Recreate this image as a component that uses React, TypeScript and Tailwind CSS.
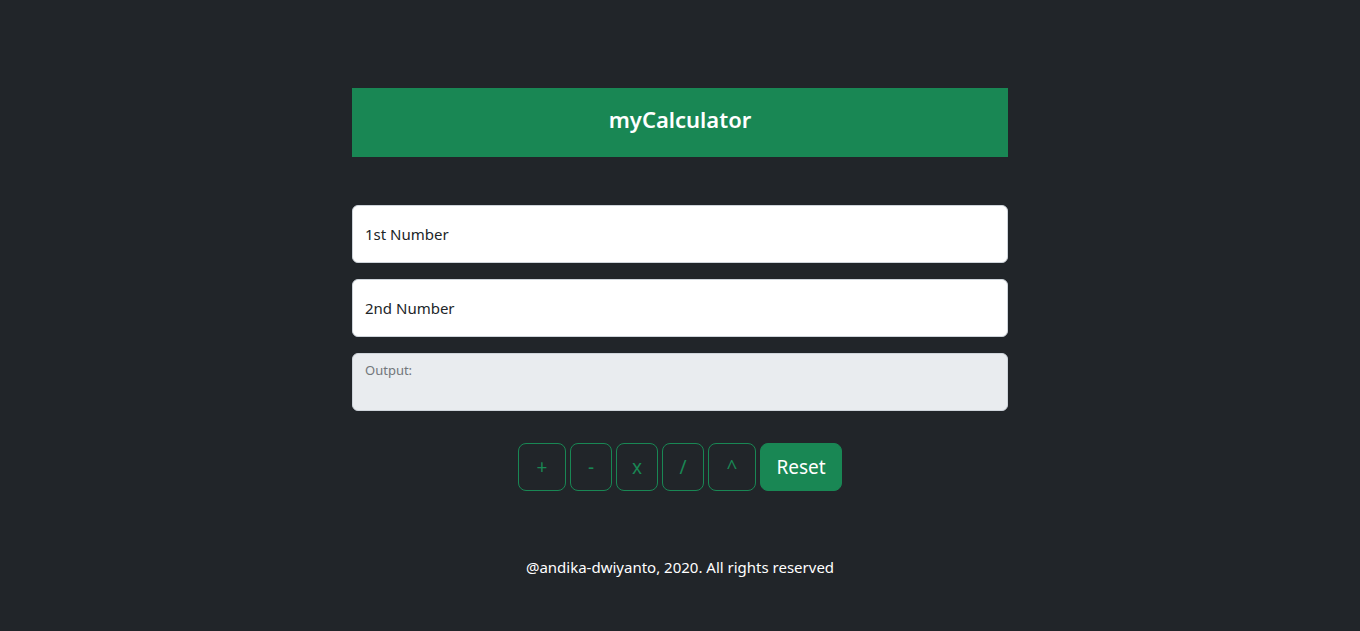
export default function App() {
  const ops = [
    { label: '+', w: 'w-12' },
    { label: '-', w: 'w-[42px]' },
    { label: 'x', w: 'w-[42px]' },
    { label: '/', w: 'w-[42px]' },
    { label: '^', w: 'w-12' },
  ];

  return (
    <div className="min-h-screen bg-[#212529] font-['Noto_Sans',sans-serif] text-[#212529]">
      <div className="mx-auto w-[656px] pt-[88px]">
        {/* Title bar */}
        <div className="flex h-[69px] items-center justify-center bg-[#198754] pb-[7px]">
          <h3 className="text-[22px] font-semibold leading-none text-white">myCalculator</h3>
        </div>

        {/* Inputs */}
        <div className="mt-[48px] flex flex-col gap-4">
          <div className="flex h-[58px] items-center rounded-md border border-[#ced4da] bg-white px-3">
            <span className="text-[15px] leading-6">1st Number</span>
          </div>
          <div className="flex h-[58px] items-center rounded-md border border-[#ced4da] bg-white px-3">
            <span className="text-[15px] leading-6">2nd Number</span>
          </div>
          <div className="h-[58px] rounded-md border border-[#ced4da] bg-[#e9ecef] px-3 pt-[9px]">
            <span className="block text-[13px] leading-[14px] text-[#72767b]">Output:</span>
          </div>
        </div>

        {/* Operator buttons */}
        <div className="mt-8 flex justify-center gap-1">
          {ops.map(op => (
            <button
              key={op.label}
              className={`${op.w} h-12 rounded-lg border border-[#198754] text-[19px] leading-[30px] text-[#198754]`}
            >
              {op.label}
            </button>
          ))}
          <button className="h-12 w-[82px] rounded-lg border border-[#198754] bg-[#198754] text-[19px] leading-[30px] text-white">
            Reset
          </button>
        </div>

        {/* Footer */}
        <p className="mt-[64px] text-center text-[15px] leading-6 text-white">
          @andika-dwiyanto, 2020. All rights reserved
        </p>
      </div>
    </div>
  );
}
